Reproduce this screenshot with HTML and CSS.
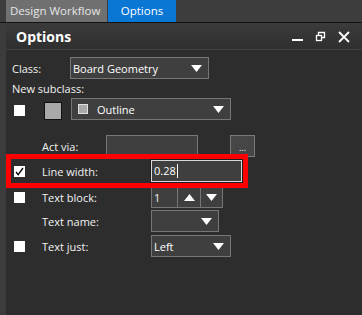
FILE: index.html
```html
<!DOCTYPE html>
<html lang="en">
<head>
    <meta charset="UTF-8">
    <title>Options</title>
    <link rel="stylesheet" href="styles.css">
</head>
<body>
    <div class="window">
        <div class="tabbar">
            <div class="tab">Design Workflow</div>
            <div class="tab tab-active">Options</div>
        </div>

        <div class="main">
            <div class="side-strip"></div>

            <div class="panel">
                <div class="panel-head">
                    <span class="panel-title">Options</span>
                    <div class="head-icons">
                        <svg width="12" height="12" viewBox="0 0 12 12"><rect x="0" y="8" width="11" height="2" fill="#fff"/></svg>
                        <svg width="12" height="12" viewBox="0 0 12 12"><path d="M3.5 1.5h6v5h-6z" fill="none" stroke="#fff" stroke-width="1.3"/><rect x="1.5" y="4.5" width="5" height="5" fill="#333" stroke="#fff" stroke-width="1.3"/></svg>
                        <svg width="12" height="12" viewBox="0 0 12 12"><path d="M1 1l10 10M11 1L1 11" stroke="#fff" stroke-width="1.8"/></svg>
                    </div>
                </div>

                <div class="panel-body">
                    <div class="row row-class">
                        <span class="class-label">Class:</span>
                        <div class="select select-class">
                            <span>Board Geometry</span>
                            <svg class="arrow" width="11" height="7" viewBox="0 0 11 7"><polygon points="0,0 11,0 5.5,7" fill="#fff"/></svg>
                        </div>
                    </div>

                    <div class="subclass-label">New subclass:</div>

                    <div class="row row-sub">
                        <span class="check-cell"><span class="checkbox"></span></span>
                        <span class="swatch"></span>
                        <div class="select select-sub">
                            <span class="mini-swatch"></span>
                            <span>Outline</span>
                            <svg class="arrow" width="11" height="7" viewBox="0 0 11 7"><polygon points="0,0 11,0 5.5,7" fill="#fff"/></svg>
                        </div>
                    </div>

                    <div class="row row-act">
                        <span class="check-cell"></span>
                        <span class="act-label">Act via:</span>
                        <div class="field field-act"></div>
                        <div class="dots-btn">...</div>
                    </div>

                    <div class="row row-line">
                        <span class="check-cell">
                            <span class="checkbox">
                                <svg width="11" height="11" viewBox="0 0 11 11"><path d="M2 6l2.2 2.6L9 2" fill="none" stroke="#000" stroke-width="1.3"/></svg>
                            </span>
                        </span>
                        <span class="label">Line width:</span>
                        <div class="field field-line">0.28<span class="caret"></span></div>
                    </div>

                    <div class="row row-block">
                        <span class="check-cell"><span class="checkbox"></span></span>
                        <span class="label">Text block:</span>
                        <div class="spinner">
                            <span class="spin-value">1</span>
                            <span class="spin-btn"><svg width="11" height="7" viewBox="0 0 11 7"><polygon points="0,7 11,7 5.5,0" fill="#fff"/></svg></span>
                            <span class="spin-btn"><svg width="11" height="7" viewBox="0 0 11 7"><polygon points="0,0 11,0 5.5,7" fill="#fff"/></svg></span>
                        </div>
                    </div>

                    <div class="row row-name">
                        <span class="check-cell"></span>
                        <span class="label">Text name:</span>
                        <div class="select select-name">
                            <span></span>
                            <svg class="arrow" width="11" height="7" viewBox="0 0 11 7"><polygon points="0,0 11,0 5.5,7" fill="#fff"/></svg>
                        </div>
                    </div>

                    <div class="row row-just">
                        <span class="check-cell"><span class="checkbox"></span></span>
                        <span class="label">Text just:</span>
                        <div class="select select-just">
                            <span>Left</span>
                            <svg class="arrow" width="11" height="7" viewBox="0 0 11 7"><polygon points="0,0 11,0 5.5,7" fill="#fff"/></svg>
                        </div>
                    </div>
                </div>
            </div>
        </div>
    </div>
</body>
</html>
```

FILE: styles.css
```css
*, *::before, *::after {
    box-sizing: border-box;
}

body {
    margin: 0;
    font-family: "Open Sans", "Noto Sans", sans-serif;
    font-size: 11px;
    color: #f2f2f2;
    background-color: #2d2d2d;
}

.window {
    width: 362px;
    height: 315px;
    display: flex;
    flex-direction: column;
    overflow: hidden;
}

.tabbar {
    height: 23px;
    display: flex;
    gap: 1px;
    padding-left: 6px;
    background-color: #3d3d3d;
    border-bottom: 1px solid #121212;
}

.tab {
    height: 22px;
    line-height: 21px;
    padding: 0 4px;
    width: 101px;
    font-size: 11.5px;
    background-color: #707070;
    color: #e6e6e6;
    white-space: nowrap;
}

.tab-active {
    width: 68px;
    text-align: center;
    background-color: #0a77d5;
    color: #fff;
}

.main {
    flex: 1;
    display: flex;
}

.side-strip {
    width: 6px;
    background-color: #3c3c3c;
}

.panel {
    flex: 1;
    display: flex;
    flex-direction: column;
    background-color: #2d2d2d;
}

.panel-head {
    height: 27px;
    display: flex;
    align-items: center;
    justify-content: space-between;
    padding: 0 12px 0 10px;
    background: linear-gradient(#3b3b3b, #2f2f2f);
    border-bottom: 1px solid #434343;
}

.panel-title {
    font-size: 14px;
    font-weight: bold;
    color: #fff;
}

.head-icons {
    display: flex;
    gap: 11px;
    margin-top: 1px;
}

.panel-body {
    padding-top: 7px;
}

.row {
    display: flex;
    align-items: center;
    height: 22px;
}

.check-cell {
    width: 36px;
    height: 11px;
    padding-left: 8px;
    display: flex;
}

.checkbox {
    width: 11px;
    height: 11px;
    display: flex;
    background-color: #fff;
}

.label {
    width: 109px;
}

.class-label {
    width: 64px;
    padding-left: 6px;
}

.subclass-label {
    height: 19px;
    line-height: 19px;
    padding-left: 6px;
}

.select {
    height: 22px;
    display: flex;
    align-items: center;
    justify-content: space-between;
    padding: 0 6px 0 2px;
    background-color: #3f3f3f;
    border: 1px solid #767676;
    color: #fff;
}

.select-class {
    width: 139px;
}

.swatch {
    width: 18px;
    height: 18px;
    margin: 3px 0 0 1px;
    background-color: #a9a9a9;
    border: 1px solid #111;
}

.select-sub {
    width: 160px;
    margin-left: 9px;
    justify-content: flex-start;
    padding-left: 6px;
}

.select-sub .arrow {
    margin-left: auto;
}

.mini-swatch {
    width: 10px;
    height: 10px;
    margin-right: 9px;
    background-color: #a9a9a9;
    border: 1px solid #e0e0e0;
}

.row-sub .check-cell {
    width: 37px;
    margin-top: 3px;
}

.row-act {
    margin-top: 15px;
}

.act-label {
    width: 64px;
}

.field {
    height: 22px;
    background-color: #3f3f3f;
    border: 1px solid #767676;
}

.field-act {
    width: 92px;
}

.dots-btn {
    width: 25px;
    height: 22px;
    margin-left: 32px;
    background-color: #464646;
    border: 1px solid #7a7a7a;
    font-size: 9px;
    line-height: 24px;
    text-align: center;
}

.row-line {
    position: relative;
    margin-top: 3px;
}

/* red annotation frame drawn over the row */
.row-line::after {
    content: "";
    position: absolute;
    left: 0;
    top: -6px;
    width: 242px;
    height: 34px;
    border: 5px solid #ff0000;
}

.field-line {
    width: 91px;
    padding-left: 2px;
    line-height: 20px;
    border-color: #d8d8d8;
    box-shadow: 0 0 0 1px #1c1c1c;
    color: #fff;
}

.caret {
    display: inline-block;
    width: 1px;
    height: 14px;
    margin-left: 1px;
    vertical-align: -3px;
    background-color: #fff;
}

.row-block {
    height: 21px;
    margin-top: 5px;
}

.spinner {
    display: flex;
    height: 21px;
    border: 1px solid #767676;
    background-color: #3f3f3f;
}

.spin-value {
    width: 26px;
    padding-left: 2px;
    line-height: 19px;
    border-right: 1px solid #767676;
}

.spin-btn {
    width: 22px;
    display: flex;
    align-items: center;
    justify-content: center;
}

.spin-btn + .spin-btn {
    border-left: 1px solid #767676;
}

.row-name {
    margin-top: 2px;
}

.select-name {
    width: 68px;
}

.row-just {
    margin-top: 3px;
}

.select-just {
    width: 80px;
}
```
